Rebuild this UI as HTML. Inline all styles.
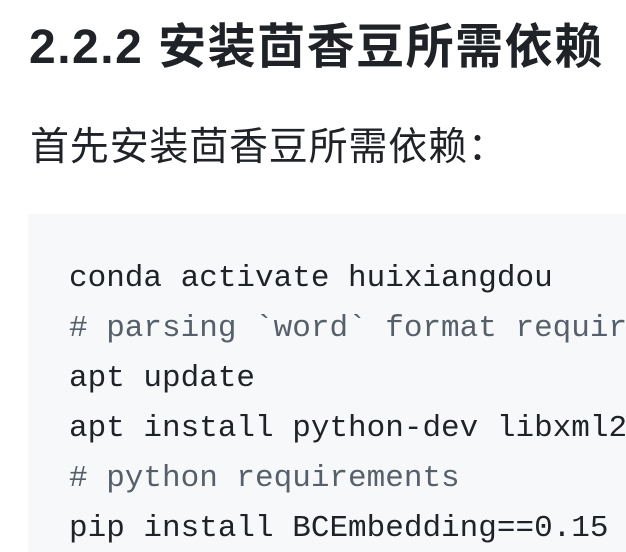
<!DOCTYPE html>
<html><head><meta charset="utf-8"><style>
html,body{margin:0;padding:0;background:#fff;width:626px;height:552px;overflow:hidden;position:relative}
.h{position:absolute;left:29px;top:15px;font:bold 48px/66px "Liberation Sans","Noto Sans CJK SC",sans-serif;color:#1f2328;white-space:nowrap;letter-spacing:1.5px}
.p{position:absolute;left:30px;top:120px;font:39px/56px "Liberation Sans","Noto Sans CJK SC",sans-serif;color:#1f2328;white-space:nowrap;letter-spacing:0.8px}
.code{position:absolute;left:28px;top:214px;width:598px;height:338px;background:#f6f8fa;overflow:hidden}
pre{position:absolute;left:41px;top:40px;margin:0;font:31px/50px "Liberation Mono","DejaVu Sans Mono",monospace;color:#1f2328;white-space:pre}
.c{color:#57606a}
</style></head><body>
<div class="h">2.2.2 安装茴香豆所需依赖</div>
<div class="p">首先安装茴香豆所需依赖：</div>
<div class="code"><pre>conda activate huixiangdou
<span class="c"># parsing `word` format requirements</span>
apt update
apt install python-dev libxml2-dev
<span class="c"># python requirements</span>
pip install BCEmbedding==0.15</pre></div>
</body></html>
